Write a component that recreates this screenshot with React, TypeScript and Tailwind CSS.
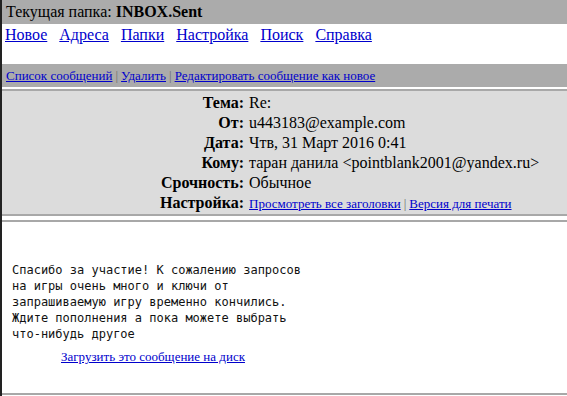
import React from "react";

const serif = { fontFamily: '"Liberation Serif", "Times New Roman", serif' };

function Sep() {
  return <span className="text-[#6e6e6e] mx-[3px]">|</span>;
}

export default function App() {
  const rows: [string, React.ReactNode][] = [
    ["Тема:", "Re:"],
    ["От:", "u443183@example.com"],
    ["Дата:", "Чтв, 31 Март 2016 0:41"],
    ["Кому:", "таран данила <pointblank2001@yandex.ru>"],
    ["Срочность:", "Обычное"],
    [
      "Настройка:",
      <span className="text-[13px]">
        <a className="text-[#0000cc] underline">Просмотреть все заголовки</a>
        <Sep />
        <a className="text-[#0000cc] underline">Версия для печати</a>
      </span>,
    ],
  ];
  return (
    <div
      className="w-[567px] h-[396px] bg-white text-black border-l-2 border-[#222] overflow-hidden"
      style={serif}
    >
      <div className="h-[24px] bg-[#ababab] pl-[4px] text-[16px] leading-[24px]">
        Текущая папка: <b>INBOX.Sent</b>
      </div>
      <div className="h-[23px] pl-[3px] text-[16px] leading-[22px] flex gap-[12px]">
        {["Новое", "Адреса", "Папки", "Настройка", "Поиск", "Справка"].map((t) => (
          <a key={t} className="text-[#0000cc] underline">
            {t}
          </a>
        ))}
      </div>
      <div className="h-[17px]" />
      <div className="h-[23px] bg-[#ababab] pl-[4px] text-[13px] leading-[23px]">
        <a className="text-[#0000cc] underline">Список сообщений</a>
        <Sep />
        <a className="text-[#0000cc] underline">Удалить</a>
        <Sep />
        <a className="text-[#0000cc] underline">Редактировать сообщение как новое</a>
      </div>
      <div className="h-[2px]" />
      <div className="border-y-2 border-[#a8a8a8] bg-[#dcdcdc] pt-[2px] pb-[1px]">
        {rows.map(([k, v]) => (
          <div key={k} className="flex h-[20px] items-center text-[16px] leading-[20px]">
            <div className="w-[242px] text-right font-bold">{k}</div>
            <div className="pl-[5px] whitespace-nowrap">{v}</div>
          </div>
        ))}
      </div>
      <div className="h-[4px]" />
      <div className="border-y-2 border-[#a8a8a8] h-[175px]">
        <pre
          className="mt-[40px] pl-[10px] text-[12px] leading-[16px] text-[#111]"
          style={{ fontFamily: '"DejaVu Sans Mono", monospace' }}
        >
          {"Спасибо за участие! К сожалению запросов\nна игры очень много и ключи от\nзапрашиваемую игру временно кончились.\nЖдите пополнения а пока можете выбрать\nчто-нибудь другое"}
        </pre>
        <div className="mt-[5px] pl-[59px] text-[13px]">
          <a className="text-[#0000cc] underline">Загрузить это сообщение на диск</a>
        </div>
      </div>
    </div>
  );
}
